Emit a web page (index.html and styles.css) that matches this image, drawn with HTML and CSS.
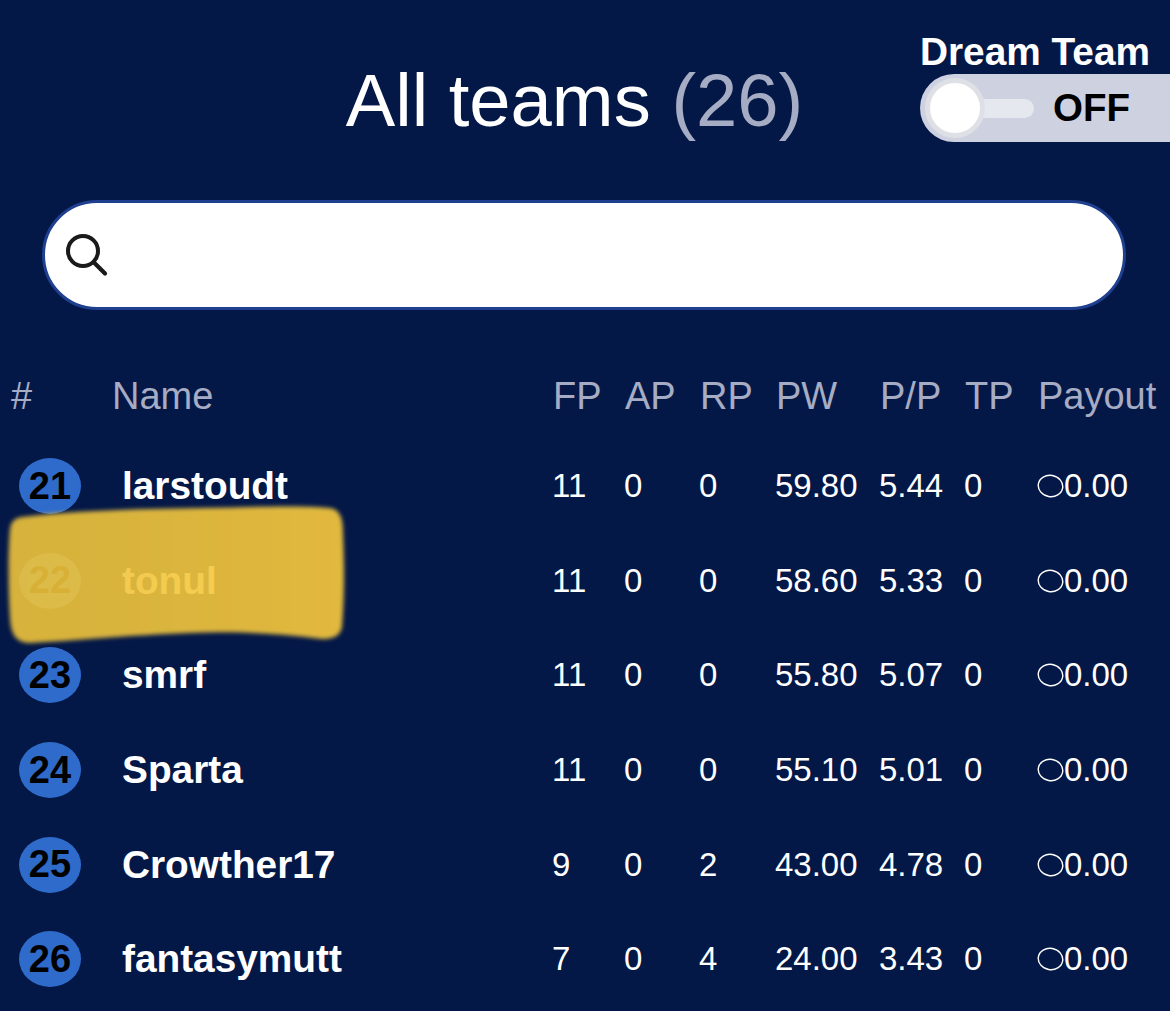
FILE: index.html
```html
<!DOCTYPE html>
<html lang="en">
<head>
  <meta charset="UTF-8" />
  <meta name="viewport" content="width=device-width, initial-scale=1.0"/>
  <title>All teams</title>
  <link rel="stylesheet" href="styles.css">
</head>
<body>
  <div class="top">
    <h1 class="title">All teams <span class="count">(26)</span></h1>
    <div class="dream">
      <div class="dream-label">Dream Team</div>
      <div class="toggle">
        <span class="knob"></span>
        <span class="track"></span>
        <span class="toggle-text">OFF</span>
      </div>
    </div>
  </div>

  <div class="search">
    <svg class="search-icon" width="48" height="48" viewBox="0 0 48 48">
      <circle cx="20" cy="20" r="15" fill="none" stroke="#1a1a1a" stroke-width="4"/>
      <path d="M31 31.500 L42 42.500" fill="none" stroke="#1a1a1a" stroke-width="4.200" stroke-linecap="round"/>
    </svg>
  </div>

  <div class="row head">
    <div>#</div><div>Name</div><div>FP</div><div>AP</div><div>RP</div><div>PW</div><div>P/P</div><div>TP</div><div>Payout</div>
  </div>

  <div class="row">
    <div><span class="badge">21</span></div><div class="name">larstoudt</div><div>11</div><div>0</div><div>0</div><div>59.80</div><div>5.44</div><div>0</div>
    <div class="payout"><svg class="coin" width="27" height="24" viewBox="0 0 27 24"><ellipse cx="13.500" cy="12" rx="12.300" ry="10.600" transform="rotate(10 13.500 12)" fill="none" stroke="#fff" stroke-width="1.400"/></svg>0.00</div>
  </div>
  <div class="row">
    <div><span class="badge">22</span></div><div class="name">tonul</div><div>11</div><div>0</div><div>0</div><div>58.60</div><div>5.33</div><div>0</div>
    <div class="payout"><svg class="coin" width="27" height="24" viewBox="0 0 27 24"><ellipse cx="13.500" cy="12" rx="12.300" ry="10.600" transform="rotate(10 13.500 12)" fill="none" stroke="#fff" stroke-width="1.400"/></svg>0.00</div>
  </div>
  <div class="row">
    <div><span class="badge">23</span></div><div class="name">smrf</div><div>11</div><div>0</div><div>0</div><div>55.80</div><div>5.07</div><div>0</div>
    <div class="payout"><svg class="coin" width="27" height="24" viewBox="0 0 27 24"><ellipse cx="13.500" cy="12" rx="12.300" ry="10.600" transform="rotate(10 13.500 12)" fill="none" stroke="#fff" stroke-width="1.400"/></svg>0.00</div>
  </div>
  <div class="row">
    <div><span class="badge">24</span></div><div class="name">Sparta</div><div>11</div><div>0</div><div>0</div><div>55.10</div><div>5.01</div><div>0</div>
    <div class="payout"><svg class="coin" width="27" height="24" viewBox="0 0 27 24"><ellipse cx="13.500" cy="12" rx="12.300" ry="10.600" transform="rotate(10 13.500 12)" fill="none" stroke="#fff" stroke-width="1.400"/></svg>0.00</div>
  </div>
  <div class="row">
    <div><span class="badge">25</span></div><div class="name">Crowther17</div><div>9</div><div>0</div><div>2</div><div>43.00</div><div>4.78</div><div>0</div>
    <div class="payout"><svg class="coin" width="27" height="24" viewBox="0 0 27 24"><ellipse cx="13.500" cy="12" rx="12.300" ry="10.600" transform="rotate(10 13.500 12)" fill="none" stroke="#fff" stroke-width="1.400"/></svg>0.00</div>
  </div>
  <div class="row">
    <div><span class="badge">26</span></div><div class="name">fantasymutt</div><div>7</div><div>0</div><div>4</div><div>24.00</div><div>3.43</div><div>0</div>
    <div class="payout"><svg class="coin" width="27" height="24" viewBox="0 0 27 24"><ellipse cx="13.500" cy="12" rx="12.300" ry="10.600" transform="rotate(10 13.500 12)" fill="none" stroke="#fff" stroke-width="1.400"/></svg>0.00</div>
  </div>

  <!-- highlighter scribble over row 22 -->
  <svg class="scribble" width="370" height="160" viewBox="0 0 370 160">
    <defs>
      <filter id="soft" x="-5%" y="-10%" width="110%" height="120%">
        <feGaussianBlur stdDeviation="2.200"/>
      </filter>
      <linearGradient id="ink" x1="0" y1="0" x2="1" y2="0">
        <stop offset="0" stop-color="#eec33b"/>
        <stop offset="0.6" stop-color="#f4c73d"/>
        <stop offset="1" stop-color="#facb3d"/>
      </linearGradient>
    </defs>
    <path d="M22 18 C70 12 130 10 200 9 C250 8 300 6 330 9 C341 11 343 20 343 35 C344 60 345 90 342 128 C340 138 332 140 322 140 C280 135 240 132 190 134 C130 136 70 142 30 144 C16 144 11 135 10 120 C8 90 8 50 10 30 C11 22 15 19 22 18 Z" fill="url(#ink)" filter="url(#soft)"/>
  </svg>
</body>
</html>
```

FILE: styles.css
```css
body {
  margin: 0;
  width: 1170px;
  height: 1011px;
  overflow: hidden;
  position: relative;
  background-color: #041847;
  color: #ffffff;
  font-family: "Liberation Sans", Arial, sans-serif;
}

.top {
  display: flex;
  height: 200px;
}

.title {
  flex: 1;
  margin: 58px 0 0;
  padding-left: 229px;
  text-align: center;
  font-size: 74.200px;
  line-height: 85px;
  font-weight: normal;
}

.count {
  color: #a6acc3;
}

.dream {
  width: 250px;
  padding-top: 30px;
}

.dream-label {
  font-size: 38.800px;
  line-height: 44px;
  font-weight: bold;
  white-space: nowrap;
}

.toggle {
  display: flex;
  align-items: center;
  height: 68px;
  background-color: #cdd1e0;
  border-radius: 34px 0 0 34px;
}

.knob {
  width: 50px;
  height: 50px;
  margin-left: 5px;
  border: 5px solid #dfe0e6;
  border-radius: 50%;
  background-color: #ffffff;
  flex-shrink: 0;
  position: relative;
  z-index: 1;
}

.track {
  width: 55px;
  height: 19px;
  margin-left: -6px;
  border-radius: 0 10px 10px 0;
  background-color: #e6e8f0;
}

.toggle-text {
  margin-left: 19px;
  color: #000000;
  font-size: 38.500px;
  font-weight: bold;
}

.search {
  display: flex;
  align-items: center;
  box-sizing: border-box;
  width: 1084px;
  height: 110px;
  margin-left: 42px;
  padding-left: 18px;
  background-color: #ffffff;
  border: 3px solid #1f3f8f;
  border-radius: 55px;
}

.row {
  display: grid;
  grid-template-columns: 100px 441px 72px 75px 76px 104px 85px 73px 133px;
  align-items: center;
  height: 94.6px;
  padding-left: 11px;
  font-size: 33px;
}

.row.head {
  height: 86px;
  margin-top: 43px;
  font-size: 38px;
  color: #a6acc3;
}

.row.head div {
  padding-left: 1px;
  white-space: nowrap;
}

.row.head div:first-child {
  padding-left: 0;
}

.badge {
  display: flex;
  align-items: center;
  justify-content: center;
  width: 62px;
  height: 56px;
  margin-left: 8px;
  border-radius: 50%;
  background-color: #2f6bcb;
  color: #000000;
  font-size: 38px;
  font-weight: bold;
}

.name {
  padding-left: 11px;
  font-size: 38.800px;
  font-weight: bold;
  white-space: nowrap;
}

.payout {
  display: flex;
  align-items: center;
}

.scribble {
  position: absolute;
  left: 0;
  top: 499px;
  opacity: 0.9;
}
```
